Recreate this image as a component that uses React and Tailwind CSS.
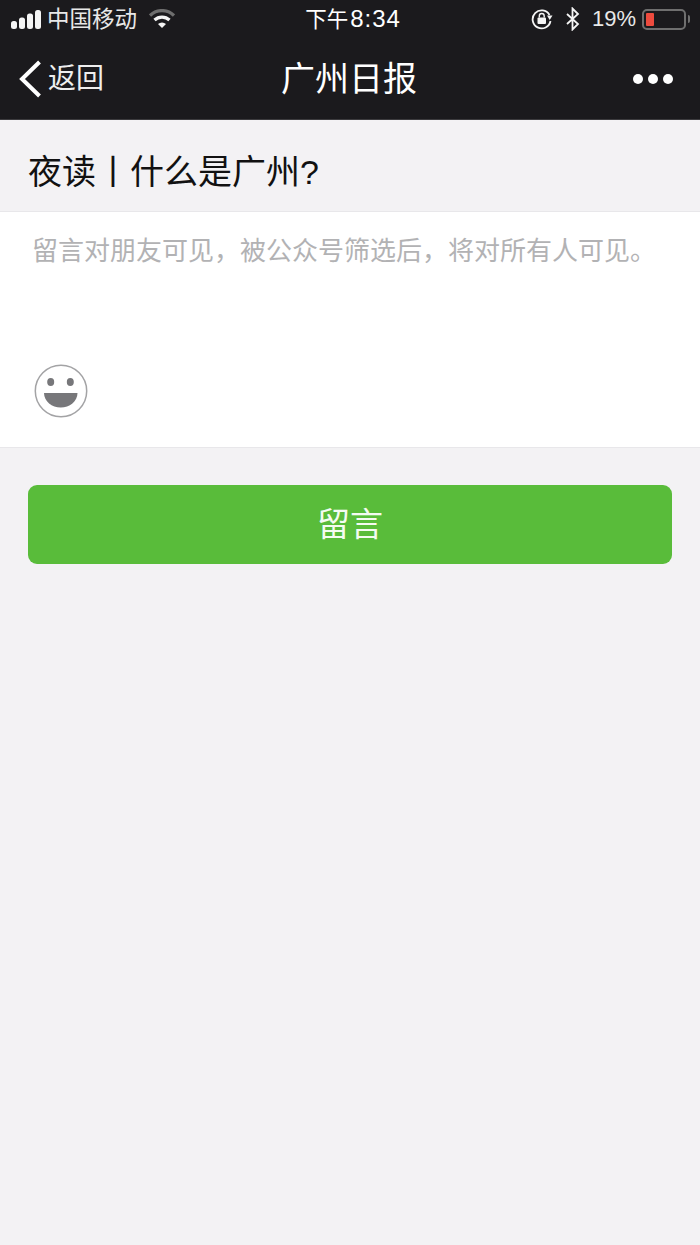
// Comment page
const CJK = "font-['Liberation_Sans','Noto_Sans_CJK_SC',sans-serif]";

function StatusBar() {
  return (
    <div className="h-[38px] flex items-center justify-between pl-[11px] pr-[10px] text-[#f2f2f2]">
      <div className="flex items-center w-[230px]">
        <svg width="31" height="19" viewBox="0 0 31 19" className="shrink-0">
          <rect x="0" y="11" width="6" height="8" rx="2.5" fill="#f5f5f5" />
          <rect x="8" y="7.5" width="6" height="11.5" rx="2.5" fill="#f5f5f5" />
          <rect x="16" y="3.5" width="6" height="15.5" rx="2.5" fill="#f5f5f5" />
          <rect x="24" y="0" width="6" height="19" rx="2.5" fill="#f5f5f5" />
        </svg>
        <span className="text-[22.5px] leading-none ml-[5px] mt-[2px] text-[#e8e8e8]">中国移动</span>
        <svg width="26" height="20" viewBox="0 0 26 20" className="ml-[12px] shrink-0">
          <path d="M1 6.5 A17 17 0 0 1 25 6.5" fill="none" stroke="#6e6e6e" strokeWidth="3.2" />
          <path d="M5.5 11 A11 11 0 0 1 20.5 11" fill="none" stroke="#f5f5f5" strokeWidth="3.2" />
          <path d="M9 15 L13 19 L17 15 A6 6 0 0 0 9 15 Z" fill="#f5f5f5" />
        </svg>
      </div>
      <span className="ml-[5px] leading-none text-white text-[21.5px] whitespace-nowrap">
        下午<span className="text-[24px] tracking-[1px] ml-[2px]">8:34</span>
      </span>
      <div className="flex items-center justify-end w-[230px]">
        <svg width="22" height="22" viewBox="0 0 22 22" className="shrink-0">
          <path d="M18.5 7 A9 9 0 1 0 19.5 13" fill="none" stroke="#f5f5f5" strokeWidth="1.8" />
          <path d="M16 7.5 L21.5 7.5 L18.7 12 Z" fill="#f5f5f5" />
          <rect x="6.5" y="9.5" width="8.5" height="6.5" rx="1" fill="#f5f5f5" />
          <path d="M8.3 9.5 V8 A2.4 2.4 0 0 1 13.2 8 V9.5" fill="none" stroke="#f5f5f5" strokeWidth="1.4" />
        </svg>
        <svg width="14" height="24" viewBox="0 0 14 24" className="ml-[13px] shrink-0">
          <path d="M1 7 L12 17 L6.5 22.5 V1.5 L12 7 L1 17" fill="none" stroke="#f5f5f5" strokeWidth="1.8" />
        </svg>
        <span className="text-[22px] leading-none ml-[12px] text-[#e8e8e8]">19%</span>
        <div className="ml-[6px] w-[44px] h-[21px] rounded-[5px] border-2 border-[#6f6f6f] p-[2px] flex">
          <div className="w-[8px] bg-[#ee4b3e] rounded-[1px]" />
        </div>
        <div className="ml-[2px] w-[2px] h-[8px] bg-[#6f6f6f] rounded-r-sm" />
      </div>
    </div>
  );
}

function NavBar() {
  return (
    <div className="h-[81px] flex items-center justify-between relative">
      <div className="flex items-center pl-[19px]">
        <svg width="23" height="38" viewBox="0 0 23 38" className="shrink-0">
          <path d="M20.5 2 L3 19 L20.5 36" fill="none" stroke="#fff" strokeWidth="4" />
        </svg>
        <span className="text-[28px] leading-none text-[#eeeeee] ml-[6px] mt-[1px]">返回</span>
      </div>
      <span className="absolute left-0 right-0 text-center text-[34px] leading-none text-white mt-[1px] pr-[2px] pointer-events-none">
        广州日报
      </span>
      <div className="flex items-center gap-[5px] pr-[27px]">
        <span className="w-[10px] h-[10px] rounded-full bg-white" />
        <span className="w-[10px] h-[10px] rounded-full bg-white" />
        <span className="w-[10px] h-[10px] rounded-full bg-white" />
      </div>
    </div>
  );
}

function Smiley() {
  return (
    <svg width="56" height="56" viewBox="0 0 56 56">
      <circle cx="28" cy="28" r="25.7" fill="none" stroke="#a3a3a5" strokeWidth="1.5" />
      <ellipse cx="17.7" cy="19" rx="3.5" ry="4" fill="#77777a" />
      <ellipse cx="37.3" cy="19" rx="3.5" ry="4" fill="#77777a" />
      <path d="M11 30 H44.5 C44.5 38.5 36.5 44.5 27.7 44.5 C19 44.5 11 38.5 11 30 Z" fill="#77777a" />
    </svg>
  );
}

export default function App() {
  return (
    <div className={`w-[700px] h-[1245px] bg-[#f3f2f4] ${CJK}`}>
      <div className="bg-[#1b1a1d] border-b border-[#3c3b3e]">
        <StatusBar />
        <NavBar />
      </div>

      <div className="h-[92px] flex items-center pl-[28px] pt-[12px] border-b border-[#e8e7ea]">
        <h1 className="text-[34px] leading-none font-normal text-[#111]">夜读丨什么是广州?</h1>
      </div>

      <div className="bg-white h-[236px] border-b border-[#e8e7ea] pl-[32px] flex flex-col">
        <p className="text-[26px] leading-none text-[#b2b2b4] mt-[26px] whitespace-nowrap">
          {"留言对朋友可见\uFF0C被公众号筛选后\uFF0C将对所有人可见。"}
        </p>
        <div className="mt-[99px] ml-[1px]">
          <Smiley />
        </div>
      </div>

      <div className="px-[28px] mt-[37px]">
        <button className="w-full h-[79px] rounded-[9px] bg-[#59bc3a] text-[33px] leading-none text-[#f4fbf1]">
          留言
        </button>
      </div>
    </div>
  );
}
